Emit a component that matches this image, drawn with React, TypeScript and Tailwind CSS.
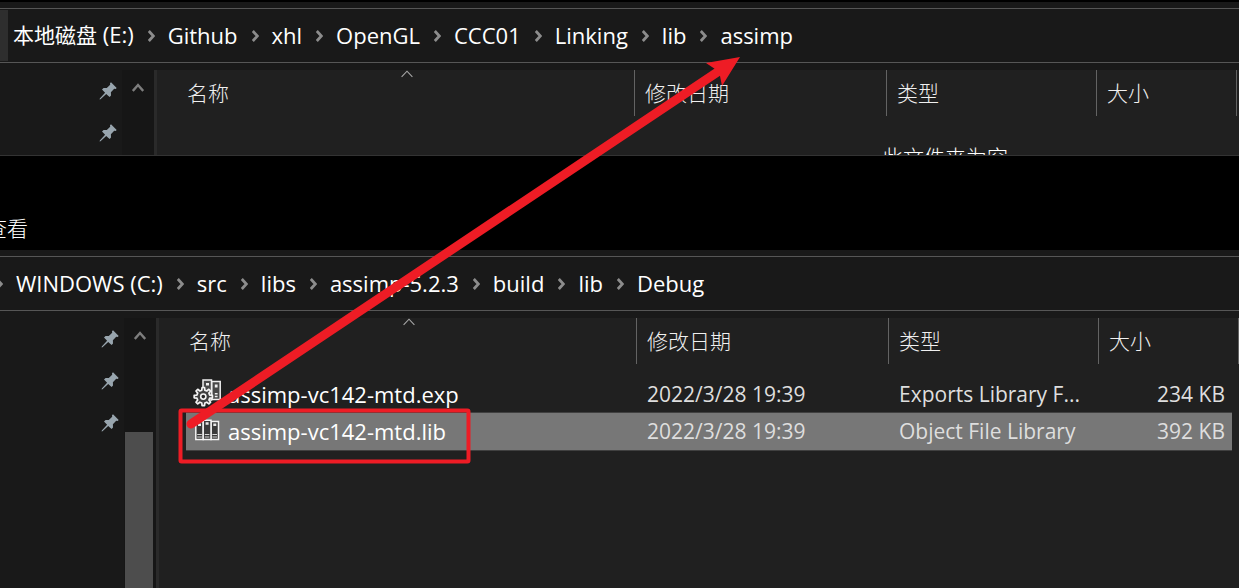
import React from "react";

type FileRow = {
  name: string;
  modified: string;
  type: string;
  size: string;
  icon: React.ReactNode;
  selected?: boolean;
};

function Chevron() {
  return (
    <svg className="mr-[13px] ml-3.5 h-3 w-[7px] shrink-0" viewBox="0 0 7 12" fill="none" stroke="#8c8c8c" strokeWidth="2.8" aria-hidden="true">
      <path d="M0.8 1 5.4 6 0.8 11" />
    </svg>
  );
}

function Pin() {
  return (
    <svg className="h-[18px] w-[18px]" viewBox="0 0 18 18" fill="#98a5ae" aria-hidden="true">
      <path d="M12 0.3 17.7 6 16.6 7 15.2 6.8 11.9 10.2 12 13.4 10.6 15 7.2 11.9 1.5 17.2 0.6 17.5 0.8 16.6 6.1 10.8 3 7.4 4.6 6 7.8 6.1 11.2 2.8 11 1.3Z" />
    </svg>
  );
}

function ScrollUp() {
  return (
    <svg className="h-[9px] w-3" viewBox="0 0 12 9" fill="none" stroke="#7d7d7d" strokeWidth="2.4" aria-hidden="true">
      <path d="M0.8 8 6 2 11.2 8" />
    </svg>
  );
}

const TEETH = 8;
const gearPoints = Array.from({ length: TEETH }, (_, i) => {
  const step = (Math.PI * 2) / TEETH;
  return [
    [-0.3, 6.6],
    [-0.17, 9.2],
    [0.17, 9.2],
    [0.3, 6.6],
  ]
    .map(([offset, radius]) => {
      const angle = i * step + offset * step;
      return `${(11.3 + radius * Math.cos(angle)).toFixed(2)},${(17.6 + radius * Math.sin(angle)).toFixed(2)}`;
    })
    .join(" ");
}).join(" ");

function ExportsIcon() {
  return (
    <svg className="h-[30px] w-[30px] shrink-0" viewBox="0 0 30 30" aria-hidden="true">
      <g fill="#484848" stroke="#f0f0f0" strokeWidth="1.5">
        <path d="M11 0.9h8.5v20H11z" />
        <path d="M19.8 2.4h8.4v18.2h-8.4z" />
      </g>
      <path d="M14 4h3v2.5h-3zM22.8 5.5h2.8V8.500h-2.8zM22.8 14h2.8v1.5h-2.8zM22.8 16.8h2.8v1.400h-2.8z" fill="#f0f0f0" />
      <polygon points={gearPoints} fill="#404040" stroke="#f4f4f4" strokeWidth="1.7" strokeLinejoin="round" />
      <circle cx="11.3" cy="17.6" r="2.6" fill="#262626" stroke="#f4f4f4" strokeWidth="1.6" />
    </svg>
  );
}

function LibraryIcon() {
  return (
    <svg className="h-[30px] w-[30px] shrink-0" viewBox="0 0 30 30" aria-hidden="true">
      <g fill="#3a3a3a" stroke="#f4f4f4" strokeWidth="1.5">
        <path d="M3.8 5.5h7.5v18h-7.5z" />
        <path d="M19 5.5h7.5v18h-7.5z" />
        <path d="M11.200 4.2h7.8v19.300h-7.8z" />
      </g>
      <path d="M6 7.500h3v2.5h-3zM13.600 6.2h3v2.5h-3zM21.3 7.5h3v2.5h-3z" fill="#e8e8e8" />
      <path d="M5.200 18.5h4.6M5.2 21h4.6M12.8 18.5h4.6M12.8 21h4.6M20.400 18.5h4.6M20.4 21h4.6" stroke="#d6d6d6" strokeWidth="1" />
    </svg>
  );
}

function AddressBar({ parts, children }: { parts: string[]; children?: React.ReactNode }) {
  return (
    <nav aria-label="Address" className="mt-1.5 flex h-[55px] items-center border-y border-[#565656] whitespace-nowrap text-white">
      {children}
      {parts.map((part, i) => {
        const split = part.match(/^([\u4e00-\u9fff]+)(.*)$/);
        return (
          <React.Fragment key={part}>
            {i > 0 && <Chevron />}
            <a href="#" className="pb-0.5 text-[22px] leading-7">
              {split ? (
                <>
                  <span className="text-[21px]">{split[1]}</span>
                  {split[2]}
                </>
              ) : (
                part
              )}
            </a>
          </React.Fragment>
        );
      })}
    </nav>
  );
}

function Sidebar({ pins, className, thumb }: { pins: number; className: string; thumb?: boolean }) {
  return (
    <aside className="flex shrink-0 border-r-[3px] border-[#2a2a2a]">
      <div className={"flex flex-col items-end gap-6 pt-3 pr-[5px] " + className}>
        {Array.from({ length: pins }, (_, i) => (
          <Pin key={i} />
        ))}
      </div>
      <div className="flex w-8 flex-col items-stretch bg-[#161616]">
        <button type="button" aria-label="Scroll up" className="flex h-[34px] items-center justify-center">
          <ScrollUp />
        </button>
        {thumb && <div className="mt-20 mr-[3px] ml-px flex-1 bg-[#4d4d4d]" />}
      </div>
    </aside>
  );
}

const headers = ["名称", "修改日期", "类型", "大小"];

function FileTable({ rows }: { rows: FileRow[] }) {
  return (
    <table className="w-full table-fixed border-collapse text-left text-[21px] leading-7 whitespace-nowrap text-[#dedede]">
      <colgroup>
        <col />
        <col className="w-[252px]" />
        <col className="w-[210px]" />
        <col className="w-[133px]" />
        <col className="w-[7px]" />
      </colgroup>
      <thead>
        <tr>
          {headers.map((label, i) => (
            <th key={label} className="h-[57px] p-0 align-top font-light text-[#f0f0f0]">
              <div className={i === 0 ? "relative flex h-[46px] items-center border-r border-[#636363] pl-[3px]" : i === 3 ? "flex h-[46px] items-center pl-2.5" : "flex h-[46px] items-center border-r border-[#636363] pl-2.5"}>
                {label}
                {i === 0 && (
                  <svg className="absolute top-0 left-1/2 h-2 w-3 -translate-x-2" viewBox="0 0 12 8" fill="none" stroke="#a8a8a8" strokeWidth="1.1" aria-hidden="true">
                    <path d="M0.6 6.8 6 1.2 11.4 6.8" />
                  </svg>
                )}
              </div>
            </th>
          ))}
          <th className="p-0 align-top">
            <div className="h-[46px] border-r border-[#636363]" />
          </th>
        </tr>
      </thead>
      <tbody>
        {rows.map((row) => {
          const cell = row.selected ? "h-[38px] bg-[#777777] border-y border-[#404040] py-0 " : "h-[37px] pt-0.5 pb-0 ";
          return (
            <tr key={row.name}>
              <td className={cell + "pr-0 pl-1.5 text-[22px] text-white"}>
                <div className="flex items-center gap-1.5">
                  {row.icon}
                  {row.name}
                </div>
              </td>
              <td className={cell + "pr-0 pl-2.5"}>{row.modified}</td>
              <td className={cell + "pr-0 pl-2.5"}>{row.type}</td>
              <td className={cell + "pr-[7px] pl-0 text-right"}>{row.size}</td>
              <td className="p-0" />
            </tr>
          );
        })}
      </tbody>
    </table>
  );
}

const files: FileRow[] = [
  { name: "assimp-vc142-mtd.exp", modified: "2022/3/28 19:39", type: "Exports Library F...", size: "234 KB", icon: <ExportsIcon /> },
  { name: "assimp-vc142-mtd.lib", modified: "2022/3/28 19:39", type: "Object File Library", size: "392 KB", icon: <LibraryIcon />, selected: true },
];

function Annotation() {
  return (
    <svg className="pointer-events-none absolute top-0 left-0 h-[588px] w-[1239px] max-w-none" viewBox="0 0 1239 588" fill="none" aria-hidden="true">
      <rect x="180.5" y="410.5" width="288" height="51" rx="1" stroke="#ee1c25" strokeWidth="4" />
      <path d="M191 424 722 69" stroke="#ee1c25" strokeWidth="9" strokeLinecap="round" />
      <path d="M740 57 706 63 715 69 720 76 722 86Z" fill="#ee1c25" />
    </svg>
  );
}

export default function App() {
  return (
    <main lang="zh-CN" className="relative flex min-h-screen flex-col overflow-hidden bg-black pt-0.5 font-['Open_Sans','Noto_Sans_CJK_SC',sans-serif]">
      <section className="flex flex-col border-b border-[#333333] bg-[#191919]">
        <AddressBar parts={["本地磁盘 (E:)", "Github", "xhl", "OpenGL", "CCC01", "Linking", "lib", "assimp"]}>
          <div className="mr-[5px] h-[51px] w-2 shrink-0 bg-[#2e2e2e]" />
        </AddressBar>
        <div className="mt-[7px] flex h-[85px] overflow-hidden">
          <Sidebar pins={2} className="w-[122px]" />
          <div className="min-w-0 flex-1 bg-[#202020] pr-0.5 pl-[27px]">
            <FileTable rows={[]} />
            <p className="mt-4 pr-[229px] text-right text-[21px] leading-7 font-light text-white">此文件夹为空</p>
          </div>
        </div>
      </section>

      <div className="flex h-[94px] items-end pb-2">
        <button type="button" className="-ml-3.5 text-[21px] leading-7 font-light text-white">
          查看
        </button>
      </div>

      <section className="flex flex-1 flex-col bg-[#191919]">
        <AddressBar parts={["WINDOWS (C:)", "src", "libs", "assimp-5.2.3", "build", "lib", "Debug"]}>
          <div className="-ml-[18px] flex">
            <Chevron />
          </div>
        </AddressBar>
        <div className="mt-[7px] flex flex-1">
          <Sidebar pins={3} className="w-[124px]" thumb />
          <div className="min-w-0 flex-1 bg-[#202020] pl-[27px]">
            <FileTable rows={files} />
          </div>
        </div>
      </section>

      <Annotation />
    </main>
  );
}
